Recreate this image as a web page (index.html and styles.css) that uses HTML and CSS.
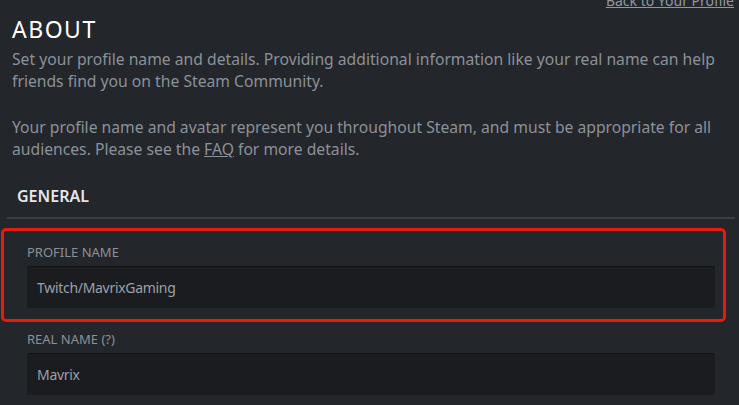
FILE: index.html
```html
<!DOCTYPE html>
<html lang="en">
<head>
<meta charset="UTF-8">
<meta name="viewport" content="width=device-width, initial-scale=1.0">
<title>Edit Profile - About</title>
<link rel="stylesheet" href="styles.css">
</head>
<body>
    <div class="page">
        <div class="top-links">
            <a href="#">Back to Your Profile</a>
        </div>
        <h2 class="title">ABOUT</h2>
        <p class="intro">Set your profile name and details. Providing additional information like your real name can help friends find you on the Steam Community.</p>
        <p class="intro">Your profile name and avatar represent you throughout Steam, and must be appropriate for all audiences. Please see the <a href="#">FAQ</a> for more details.</p>

        <div class="section-head">GENERAL</div>

        <div class="field highlighted">
            <label for="personaName">PROFILE NAME</label>
            <input type="text" id="personaName" value="Twitch/MavrixGaming">
        </div>
        <div class="field">
            <label for="realName">REAL NAME (?)</label>
            <input type="text" id="realName" value="Mavrix">
        </div>
    </div>
</body>
</html>
```

FILE: styles.css
```css
body {
    font-family: "Noto Sans", Arial, sans-serif;
    margin: 0;
    padding: 0;
    background-color: #23262b;
    overflow: hidden;
}
.page {
    padding: 0 4px 0 7px;
}
.top-links {
    display: flex;
    justify-content: flex-end;
    margin-top: -7px;
    padding-right: 1px;
    font-size: 14px;
    line-height: 16px;
}
.top-links a {
    color: #8f98a0;
}
.title {
    margin: 7px 0 0;
    padding-left: 5px;
    font-size: 23px;
    line-height: 26px;
    font-weight: normal;
    letter-spacing: 1.5px;
    color: #fff;
}
.intro {
    margin: 6px 0 24px;
    padding-left: 5px;
    font-size: 15.7px;
    line-height: 22px;
    color: #8b9198;
}
.intro + .intro {
    margin-top: 0;
}
.intro a {
    color: #8b9198;
}
.section-head {
    margin-top: 26px;
    padding: 0 0 11px 10px;
    font-size: 16px;
    line-height: 20px;
    font-weight: 600;
    color: #e4e7ea;
    border-bottom: 2px solid #3a3d43;
}
.field {
    padding: 0 20px;
    margin-top: 9px;
}
.field label {
    display: block;
    margin-bottom: 6px;
    font-size: 13px;
    line-height: 16px;
    color: #8b9198;
}
.field input {
    display: block;
    width: 100%;
    height: 42px;
    box-sizing: border-box;
    padding: 0 10px;
    border: none;
    border-top: 1px solid #101214;
    border-radius: 3px;
    background-color: #1a1c1f;
    font-family: inherit;
    font-size: 14px;
    letter-spacing: -0.3px;
    color: #9ba1a8;
    outline: none;
}
.field.highlighted {
    margin: 9px 9px 0 -6px;
    padding: 13px 8px 11px 23px;
    border: 3px solid #e8190f;
    border-radius: 5px;
}
```
